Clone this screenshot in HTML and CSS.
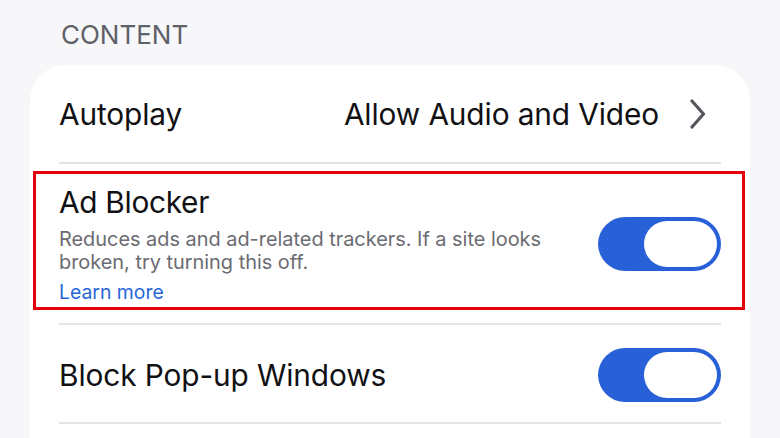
FILE: index.html
```html
<!DOCTYPE html>
<html>
<head>
<meta charset="utf-8">
<link rel="stylesheet" href="styles.css">
</head>
<body>
<div class="section-title">CONTENT</div>
<div class="card">
  <div class="row row-autoplay">
    <span class="label">Autoplay</span>
    <span class="value">Allow Audio and Video</span>
    <svg class="chevron" width="18" height="30" viewBox="0 0 18 30"><path d="M3 2 L14.5 15 L3 28" fill="none" stroke="#55555c" stroke-width="3.2" stroke-linecap="round" stroke-linejoin="round"/></svg>
  </div>
  <div class="divider"></div>
  <div class="row row-ad highlighted">
    <div class="text">
      <div class="label">Ad Blocker</div>
      <div class="desc">Reduces ads and ad-related trackers. If a site looks broken, try turning this off.</div>
      <div class="link">Learn more</div>
    </div>
    <div class="toggle"><div class="knob"></div></div>
  </div>
  <div class="divider"></div>
  <div class="row row-popup">
    <span class="label">Block Pop-up Windows</span>
    <div class="toggle"><div class="knob"></div></div>
  </div>
  <div class="divider"></div>
</div>
</body>
</html>
```
FILE: styles.css
```css
html, body {
  margin: 0;
  padding: 0;
  background: #f7f7f9;
  font-family: Inter, "Noto Sans", sans-serif;
  overflow: hidden;
  height: 438px;
}
.section-title {
  padding: 19px 0 0 61px;
  height: 65px;
  box-sizing: border-box;
  font-size: 26px;
  line-height: 32px;
  color: #606068;
}
.card {
  width: 720px;
  height: 380px;
  margin-left: 30px;
  background: #fff;
  border-radius: 36px 36px 0 0;
  padding: 0 29px 0 29px;
  box-sizing: border-box;
}
.row {
  display: flex;
  align-items: center;
}
.label {
  font-size: 29.8px;
  color: #111114;
  letter-spacing: -0.1px;
}
.row-autoplay {
  height: 97px;
  padding-top: 0;
  box-sizing: border-box;
}
.row-autoplay .value {
  margin-left: auto;
  font-size: 29.8px;
  color: #111114;
  letter-spacing: -0.1px;
}
.chevron {
  margin-left: 30px;
  margin-right: 14px;
}
.divider {
  height: 2px;
  background: #e3e3e8;
}
.row-ad {
  position: relative;
  height: 159px;
  align-items: flex-start;
  justify-content: space-between;
}
.highlighted::after {
  content: "";
  position: absolute;
  left: -26px;
  right: -24px;
  top: 7px;
  bottom: 13px;
  border: 3px solid #e6000b;
}
.row-ad .text {
  padding-top: 20px;
  width: 510px;
}
.row-ad .label {
  line-height: 36px;
  letter-spacing: -0.3px;
}
.desc {
  margin-top: 8px;
  font-size: 19.9px;
  line-height: 23px;
  color: #6b6b72;
  width: 505px;
}
.link {
  margin-top: 6px;
  font-size: 19.4px;
  line-height: 24px;
  color: #2767d8;
}
.toggle {
  width: 123px;
  height: 54px;
  border-radius: 27px;
  background: #2860d8;
  position: relative;
  flex: none;
}
.row-ad .toggle {
  margin-top: 53px;
}
.knob {
  position: absolute;
  right: 4px;
  top: 4px;
  width: 73px;
  height: 46px;
  border-radius: 23px;
  background: #fff;
}
.row-popup {
  height: 97px;
  justify-content: space-between;
  padding-top: 2px;
  box-sizing: border-box;
}
```
